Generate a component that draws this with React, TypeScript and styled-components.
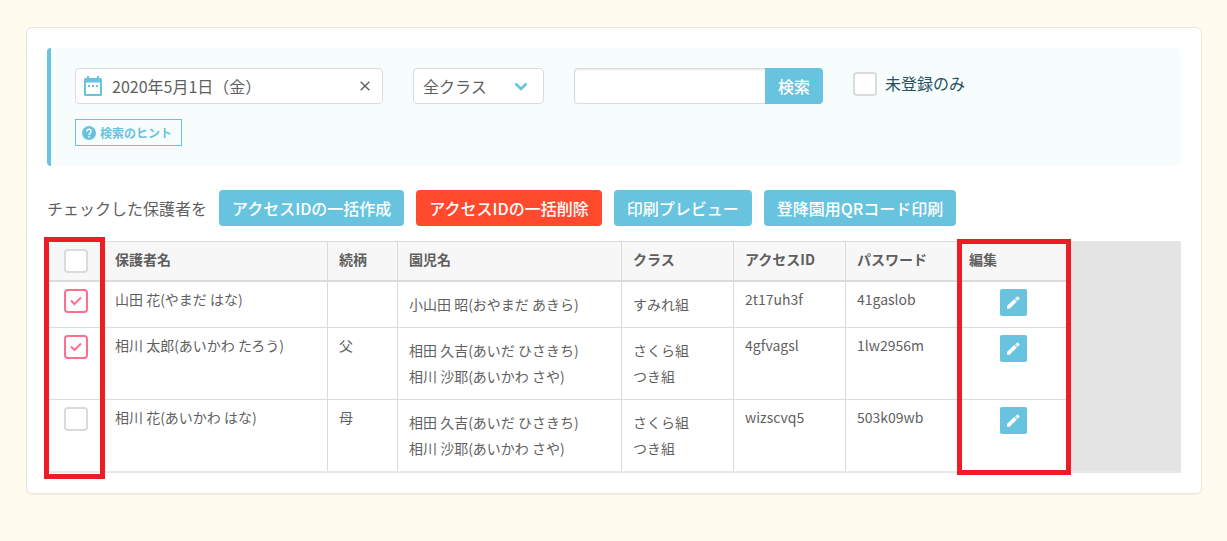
import React, { useState } from "react";
import styled, { createGlobalStyle } from "styled-components";

const colors = {
  accent: "#68c4de",
  danger: "#ff4a2e",
  mark: "#ee1c25",
  line: "#dbdbdb",
  text: "#5f5f5f",
  pink: "#ff6f8b",
};

const GlobalStyle = createGlobalStyle`
  *, *::before, *::after { box-sizing: border-box; }
  body {
    margin: 0;
    background: #fffbee;
    color: ${colors.text};
    font-family: "Noto Sans CJK JP", sans-serif;
    font-size: 14px;
  }
  button, input, select { font: inherit; color: inherit; }
  button { cursor: pointer; }
`;

const Page = styled.main`
  padding: 27px 25px 47px 26px;
`;

const Card = styled.section`
  padding: 20px;
  background: #fff;
  border: 1px solid #ebe9df;
  border-radius: 6px;
  box-shadow: 0 1px 2px rgba(0, 0, 0, 0.06);
`;

const FilterPanel = styled.form`
  display: flex;
  flex-direction: column;
  align-items: flex-start;
  gap: 15px;
  padding: 20px 24px;
  background: #f7fdfd;
  border-left: 4px solid ${colors.accent};
  border-radius: 4px;
`;

const FilterRow = styled.div`
  display: flex;
  flex-wrap: wrap;
  gap: 30px;
  font-size: 16px;
`;

const DateField = styled.div`
  display: flex;
  align-items: center;
  gap: 10px;
  width: 308px;
  height: 36px;
  padding: 0 8px;
  background: #fff;
  border: 1px solid ${colors.line};
  border-radius: 4px;
`;

const DateInput = styled.input`
  flex: 1;
  min-width: 0;
  padding: 0;
  border: 0;
  outline: 0;
  background: transparent;
`;

const ClearButton = styled.button`
  display: flex;
  padding: 4px;
  border: 0;
  background: transparent;
`;

const SelectBox = styled.div`
  display: grid;
  align-items: center;
  width: 131px;
  height: 36px;
  background: #fff;
  border: 1px solid ${colors.line};
  border-radius: 4px;

  > * { grid-area: 1 / 1; }
  > svg { justify-self: end; margin-right: 15px; pointer-events: none; }
`;

const Select = styled.select`
  appearance: none;
  width: 100%;
  height: 100%;
  padding: 0 9px;
  border: 0;
  background: transparent;
`;

const SearchGroup = styled.div`
  display: flex;
  height: 36px;
`;

const SearchInput = styled.input`
  width: 191px;
  padding: 0 8px;
  background: #fff;
  border: 1px solid ${colors.line};
  border-right: 0;
  border-radius: 4px 0 0 4px;
  box-shadow: inset 0 1px 2px rgba(0, 0, 0, 0.1);
`;

const SearchButton = styled.button`
  width: 58px;
  padding: 0;
  border: 0;
  border-radius: 0 4px 4px 0;
  background: ${colors.accent};
  color: #fff;
  font-weight: 500;
`;

const CheckLabel = styled.label`
  display: flex;
  align-items: flex-start;
  gap: 8px;
  padding-top: 4px;
  line-height: 22px;
  color: #27525f;
`;

const HintButton = styled.button`
  display: flex;
  align-items: center;
  gap: 4px;
  height: 27px;
  padding: 0 9px 0 6px;
  border: 1px solid ${colors.accent};
  background: #f7fdfd;
  color: ${colors.accent};
  font-size: 12px;
  font-weight: 700;
`;

const Actions = styled.div`
  display: flex;
  flex-wrap: wrap;
  align-items: center;
  gap: 12px;
  margin: 24px 0 15px;
  font-size: 16px;
`;

const ActionButton = styled.button<{ $danger?: boolean }>`
  height: 36px;
  padding: 0 13px;
  border: 0;
  border-radius: 4px;
  background: ${(p) => (p.$danger ? colors.danger : colors.accent)};
  color: #fff;
  font-weight: 500;
`;

const TableArea = styled.div`
  position: relative;
  background: #e4e4e4;
  border-bottom: 2px solid #e9e9e9;
`;

const Table = styled.table`
  width: 1023px;
  table-layout: fixed;
  border-collapse: separate;
  border-spacing: 0;
  background: #fff;
  line-height: 20px;

  th, td {
    padding: 7px 11px;
    border-right: 1px solid ${colors.line};
    border-bottom: 1px solid ${colors.line};
    text-align: left;
    vertical-align: top;
  }
  th {
    border-top: 1px solid ${colors.line};
    border-bottom-width: 2px;
    background: #f7f7f7;
    font-weight: 700;
  }
  tr > :first-child { border-left: 1px solid ${colors.line}; }
  tbody tr:last-child td { border-bottom: 0; }
`;

const Col = styled.col<{ $w: number }>`
  width: ${(p) => p.$w}px;
`;

const Centered = styled.div`
  display: flex;
  justify-content: center;
`;

const LineList = styled.ul`
  margin: 0;
  padding: 2px 0 3px;
  list-style: none;
  line-height: 26px;
`;

const EditButton = styled.button`
  display: grid;
  place-items: center;
  width: 27px;
  height: 27px;
  padding: 0;
  border: 0;
  border-radius: 2px;
  background: ${colors.accent};
`;

const CheckWrap = styled.span`
  display: grid;
  place-items: center;
  width: 24px;
  height: 24px;

  > * { grid-area: 1 / 1; }
  > svg { pointer-events: none; }
`;

const CheckInput = styled.input`
  appearance: none;
  width: 24px;
  height: 24px;
  margin: 0;
  background: #fff;
  border: 2px solid ${colors.line};
  border-radius: 4px;

  &:checked { border-color: ${colors.pink}; }
`;

const Highlight = styled.div<{ $column: "select" | "edit" }>`
  position: absolute;
  ${(p) =>
    p.$column === "select"
      ? "left: -3px; width: 61px; top: -4px; bottom: -8px;"
      : "left: 910px; width: 114px; top: -2px; bottom: -4px;"}
  border: 5px solid ${colors.mark};
  pointer-events: none;
`;

const CalendarIcon = () => (
  <svg width="18" height="20" viewBox="0 0 18 20" aria-hidden="true">
    <path
      fill={colors.accent}
      fillRule="evenodd"
      d="M3 0h2v2h8V0h2v2h1.500A1.500 1.500 0 0 1 18 3.500v15a1.500 1.500 0 0 1-1.500 1.500h-15A1.500 1.500 0 0 1 0 18.500v-15A1.500 1.500 0 0 1 1.500 2H3zM2 6.500V18h14V6.500zM4 9h2v2H4zM8 9h2v2H8zM12 9h2v2h-2z"
    />
  </svg>
);

const CloseIcon = () => (
  <svg width="10" height="10" viewBox="0 0 10 10" aria-hidden="true">
    <path d="M.7.7l8.600 8.600M9.300.7L.7 9.300" stroke={colors.text} strokeWidth="1.400" />
  </svg>
);

const ChevronIcon = () => (
  <svg width="14" height="9" viewBox="0 0 14 9" aria-hidden="true">
    <path d="M1.500 1.500L7 7l5.500-5.500" fill="none" stroke={colors.accent} strokeWidth="2.600" />
  </svg>
);

const HelpIcon = () => (
  <svg width="14" height="14" viewBox="0 0 14 14" aria-hidden="true">
    <circle cx="7" cy="7" r="7" fill={colors.accent} />
    <path
      d="M4.900 5.400a2.100 2.100 0 1 1 3.400 1.600C7.500 7.600 7 7.900 7 8.900"
      fill="none"
      stroke="#fff"
      strokeWidth="1.500"
    />
    <path d="M6.200 9.900h1.600v1.500H6.200z" fill="#fff" />
  </svg>
);

const PencilIcon = () => (
  <svg width="13" height="13" viewBox="0 0 13 13" aria-hidden="true">
    <path fill="#fff" d="M0 10.100v2.700h2.700L9.900 5.600 7.200 2.900z" />
    <path
      fill="#fff"
      fillOpacity="0.850"
      d="M7.900 2.200l2.700 2.700 1.900-1.800a.8.8 0 0 0 0-1.200L11.200.7a.9.900 0 0 0-1.300 0z"
    />
  </svg>
);

type CheckProps = {
  checked: boolean;
  onChange: (next: boolean) => void;
  label?: string;
  id?: string;
};

const Check = ({ checked, onChange, label, id }: CheckProps) => (
  <CheckWrap>
    <CheckInput
      id={id}
      type="checkbox"
      aria-label={label}
      checked={checked}
      onChange={(e) => onChange(e.target.checked)}
    />
    {checked && (
      <svg width="12" height="10" viewBox="0 0 12 10" aria-hidden="true">
        <path d="M1 4.500L4.500 8 11 1.500" fill="none" stroke={colors.pink} strokeWidth="2" />
      </svg>
    )}
  </CheckWrap>
);

const guardians = [
  {
    name: "山田 花(やまだ はな)",
    relation: "",
    children: ["小山田 昭(おやまだ あきら)"],
    classes: ["すみれ組"],
    accessId: "2t17uh3f",
    password: "41gaslob",
  },
  {
    name: "相川 太郎(あいかわ たろう)",
    relation: "父",
    children: ["相田 久吉(あいだ ひさきち)", "相川 沙耶(あいかわ さや)"],
    classes: ["さくら組", "つき組"],
    accessId: "4gfvagsl",
    password: "1lw2956m",
  },
  {
    name: "相川 花(あいかわ はな)",
    relation: "母",
    children: ["相田 久吉(あいだ ひさきち)", "相川 沙耶(あいかわ さや)"],
    classes: ["さくら組", "つき組"],
    accessId: "wizscvq5",
    password: "503k09wb",
  },
];

const columnWidths = [57, 224, 70, 224, 112, 112, 112, 112];
const headings = ["保護者名", "続柄", "園児名", "クラス", "アクセスID", "パスワード", "編集"];

const Lines = ({ items }: { items: string[] }) => (
  <LineList>
    {items.map((item) => (
      <li key={item}>{item}</li>
    ))}
  </LineList>
);

export default function App() {
  const [date, setDate] = useState("2020年5月1日（金）");
  const [unregistered, setUnregistered] = useState(false);
  const [selected, setSelected] = useState([true, true, false]);
  const allSelected = selected.every(Boolean);

  return (
    <>
      <GlobalStyle />
      <Page>
        <Card>
          <FilterPanel onSubmit={(e) => e.preventDefault()}>
            <FilterRow>
              <DateField>
                <CalendarIcon />
                <DateInput aria-label="日付" value={date} onChange={(e) => setDate(e.target.value)} />
                <ClearButton type="button" aria-label="日付を消す" onClick={() => setDate("")}>
                  <CloseIcon />
                </ClearButton>
              </DateField>
              <SelectBox>
                <Select aria-label="クラス">
                  <option>全クラス</option>
                </Select>
                <ChevronIcon />
              </SelectBox>
              <SearchGroup>
                <SearchInput type="text" aria-label="検索語" />
                <SearchButton type="submit">検索</SearchButton>
              </SearchGroup>
              <CheckLabel htmlFor="unregistered">
                <Check id="unregistered" checked={unregistered} onChange={setUnregistered} />
                未登録のみ
              </CheckLabel>
            </FilterRow>
            <HintButton type="button">
              <HelpIcon />
              検索のヒント
            </HintButton>
          </FilterPanel>

          <Actions>
            <span>チェックした保護者を</span>
            <ActionButton type="button">アクセスIDの一括作成</ActionButton>
            <ActionButton type="button" $danger>
              アクセスIDの一括削除
            </ActionButton>
            <ActionButton type="button">印刷プレビュー</ActionButton>
            <ActionButton type="button">登降園用QRコード印刷</ActionButton>
          </Actions>

          <TableArea>
            <Table>
              <colgroup>
                {columnWidths.map((w, i) => (
                  <Col key={i} $w={w} />
                ))}
              </colgroup>
              <thead>
                <tr>
                  <th scope="col">
                    <Centered>
                      <Check
                        label="すべて選択"
                        checked={allSelected}
                        onChange={(next) => setSelected(selected.map(() => next))}
                      />
                    </Centered>
                  </th>
                  {headings.map((heading) => (
                    <th key={heading} scope="col">
                      {heading}
                    </th>
                  ))}
                </tr>
              </thead>
              <tbody>
                {guardians.map((g, i) => (
                  <tr key={g.name}>
                    <td>
                      <Centered>
                        <Check
                          label={g.name}
                          checked={selected[i]}
                          onChange={(next) => setSelected(selected.map((s, j) => (j === i ? next : s)))}
                        />
                      </Centered>
                    </td>
                    <td>{g.name}</td>
                    <td>{g.relation}</td>
                    <td>
                      <Lines items={g.children} />
                    </td>
                    <td>
                      <Lines items={g.classes} />
                    </td>
                    <td>{g.accessId}</td>
                    <td>{g.password}</td>
                    <td>
                      <Centered>
                        <EditButton type="button" aria-label="編集">
                          <PencilIcon />
                        </EditButton>
                      </Centered>
                    </td>
                  </tr>
                ))}
              </tbody>
            </Table>
            <Highlight $column="select" />
            <Highlight $column="edit" />
          </TableArea>
        </Card>
      </Page>
    </>
  );
}
